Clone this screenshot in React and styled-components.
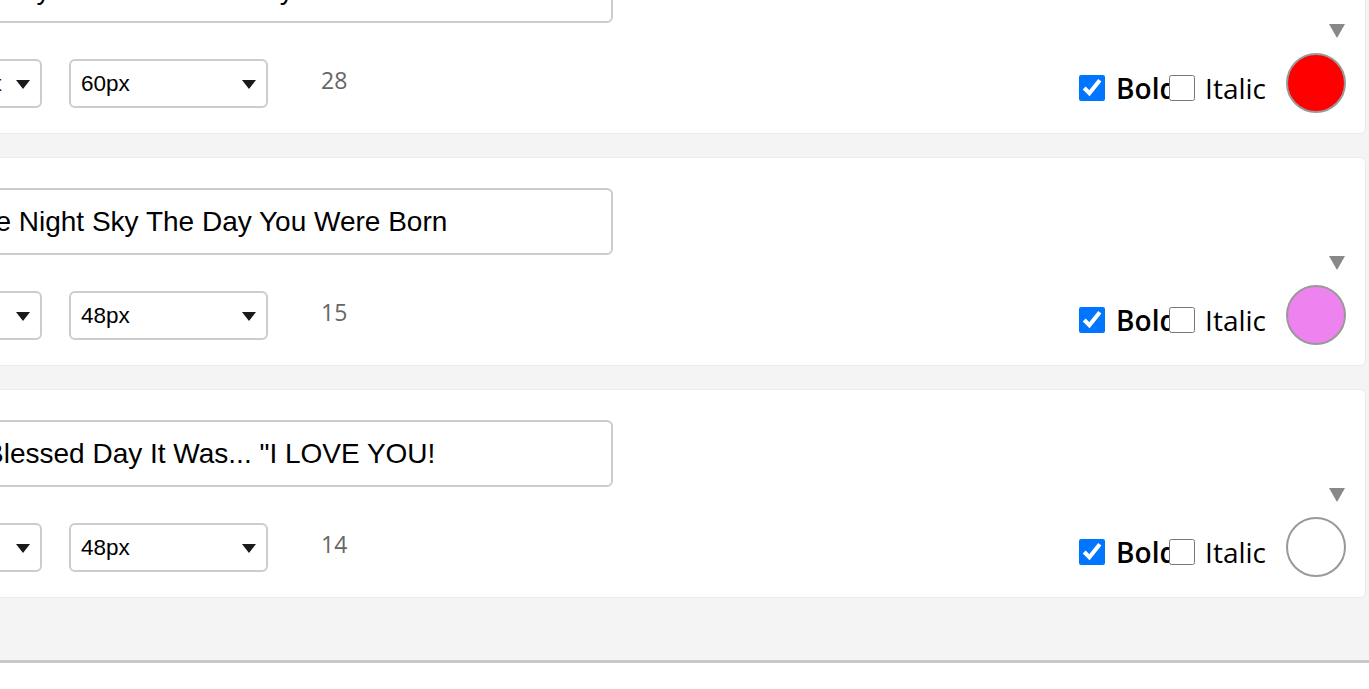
import React from "react";
import styled, {createGlobalStyle} from "styled-components";

const GlobalStyle = createGlobalStyle`
  html, body {
    margin: 0;
    padding: 0;
    background: #ffffff;
    overflow: hidden;
  }
  body {
    font-family: "Open Sans", "Noto Sans", sans-serif;
  }
`

const Panel = styled.div`
  margin: -98px 0 0 -181px;
  width: 1550px;
  box-sizing: border-box;
  padding: 23px 3px 62px 2px;
  background: #f4f4f4;
  border-bottom: 3px solid #c8c8c8;
  box-shadow: 0 6px 14px rgba(0, 0, 0, 0.1);
  display: flex;
  flex-direction: column;
  gap: 23px;
`

const Card = styled.div`
  background: #ffffff;
  border: 1px solid #ebebeb;
  border-radius: 6px;
  padding: 30px 19px 20px 21px;
  display: flex;
  justify-content: space-between;
  align-items: flex-end;
`

const Left = styled.div`
  display: flex;
  flex-direction: column;
  gap: 36px;
  margin-bottom: 5px;
`

const TextInput = styled.input`
  width: 770px;
  height: 67px;
  box-sizing: border-box;
  padding: 0 14px;
  border: 2px solid #cccccc;
  border-radius: 6px;
  font-family: "Liberation Sans", Arial, sans-serif;
  font-size: 28px;
  color: #000000;
  background: #ffffff;
  outline: none;
`

const Controls = styled.div`
  display: flex;
  align-items: center;
`

const SelectWrap = styled.div`
  position: relative;
  width: 199px;
  margin-right: 27px;
  &::after {
    content: "";
    position: absolute;
    right: 12px;
    top: 21px;
    border-left: 7.5px solid transparent;
    border-right: 7.5px solid transparent;
    border-top: 9px solid #1a1a1a;
    pointer-events: none;
  }
`

const Select = styled.select`
  appearance: none;
  width: 100%;
  height: 49px;
  box-sizing: border-box;
  padding: 0 36px 0 10px;
  border: 2px solid #cccccc;
  border-radius: 6px;
  background: #ffffff;
  font-family: "Liberation Sans", Arial, sans-serif;
  font-size: 22.5px;
  color: #000000;
  outline: none;
`

const Count = styled.span`
  margin: 0 0 8px 26px;
  font-size: 23px;
  color: #666666;
`

const Right = styled.div`
  display: flex;
  flex-direction: column;
  align-items: flex-end;
  gap: 15px;
`

const Caret = styled.div`
  width: 0;
  height: 0;
  margin-right: 1px;
  border-left: 8.5px solid transparent;
  border-right: 8.5px solid transparent;
  border-top: 14px solid #888888;
`

const StyleRow = styled.div`
  display: flex;
  align-items: center;
`

const Check = styled.label`
  display: flex;
  align-items: center;
  gap: ${p => p.$bold ? "11px" : "10px"};
  width: ${p => p.$width || "auto"};
  margin-top: 10px;
  font-size: 28px;
  font-weight: ${p => p.$bold ? 600 : 400};
  color: #000000;
  white-space: nowrap;
  input {
    width: 26px;
    height: 26px;
    margin: 0;
    flex-shrink: 0;
  }
`

const Swatch = styled.div`
  width: 60px;
  height: 60px;
  box-sizing: border-box;
  margin-left: 20px;
  border-radius: 50%;
  border: 2px solid #999999;
  background: ${p => p.$color};
`

const lines = [
    {text: "Happy Birthday To The Love Of My Life", font: "Dancing Script", size: "60px", count: 28, color: "#ff0000"},
    {text: "Stars In The Night Sky The Day You Were Born", font: "Arial", size: "48px", count: 15, color: "#ee82ee"},
    {text: "O What A Blessed Day It Was... \"I LOVE YOU!", font: "Arial", size: "48px", count: 14, color: "#ffffff"},
]

const LineCard = ({line}) => {
    return <Card>
        <Left>
            <TextInput defaultValue={line.text}/>
            <Controls>
                <SelectWrap>
                    <Select defaultValue={line.font}>
                        <option>{line.font}</option>
                    </Select>
                </SelectWrap>
                <SelectWrap>
                    <Select defaultValue={line.size}>
                        <option>{line.size}</option>
                    </Select>
                </SelectWrap>
                <Count>{line.count}</Count>
            </Controls>
        </Left>
        <Right>
            <Caret/>
            <StyleRow>
                <Check $bold $width={"90px"}>
                    <input type="checkbox" defaultChecked/>
                    Bold
                </Check>
                <Check>
                    <input type="checkbox"/>
                    Italic
                </Check>
                <Swatch $color={line.color}/>
            </StyleRow>
        </Right>
    </Card>
}

export default function App() {
    return <>
        <GlobalStyle/>
        <Panel>
            {lines.map((l, i) => <LineCard key={i} line={l}/>)}
        </Panel>
    </>
}
